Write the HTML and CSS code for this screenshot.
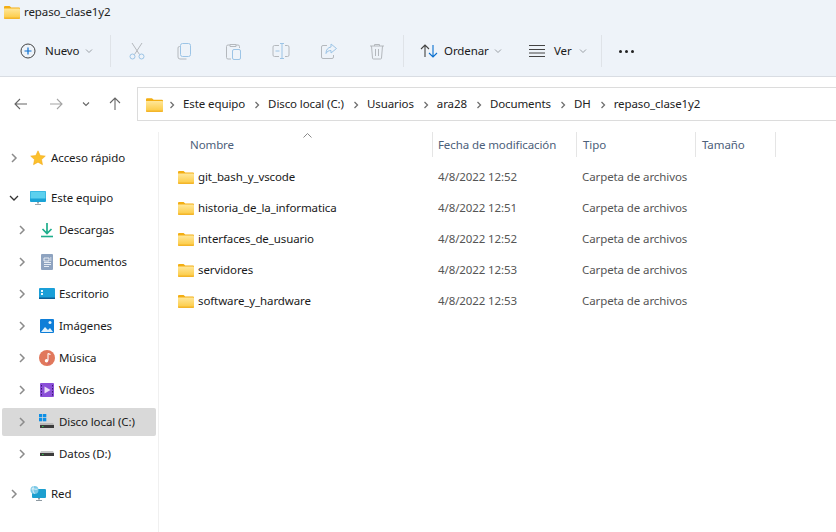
FILE: index.html
```html
<!DOCTYPE html>
<html lang="es">
<head>
<meta charset="utf-8">
<title>repaso_clase1y2</title>
<link rel="stylesheet" href="styles.css">
</head>
<body>
<svg class="defs" width="0" height="0" aria-hidden="true">
  <defs>
    <linearGradient id="fg" x1="0" y1="0" x2="0" y2="1"><stop offset="0" stop-color="#ffe79a"/><stop offset="1" stop-color="#fcc93f"/></linearGradient>
    <symbol id="folder" viewBox="0 0 16 14">
      <path d="M0 2a1 1 0 0 1 1-1h4.600l1.600 1.500H15a1 1 0 0 1 1 1V6H0z" fill="#f3ae13"/>
      <path d="M0 3.600h15.200a.8.8 0 0 1 .8.8v8.400a1 1 0 0 1-1 1H1a1 1 0 0 1-1-1z" fill="url(#fg)"/>
      <path d="M0 12.600h16v.4a1 1 0 0 1-1 1H1a1 1 0 0 1-1-1z" fill="#f3b52a"/>
    </symbol>
    <symbol id="chev" viewBox="0 0 10 10"><path d="M3 1l4 4-4 4" fill="none" stroke="#8b8b8b" stroke-width="1.500"/></symbol>
    <symbol id="crumb" viewBox="0 0 6 8"><path d="M1.500 1l3 3-3 3" fill="none" stroke="#6f6f6f" stroke-width="1.300"/></symbol>
    <symbol id="down" viewBox="0 0 8 6"><path d="M1 1.500l3 3 3-3" fill="none" stroke="#9aa0a6" stroke-width="1"/></symbol>
  </defs>
</svg>

<header class="ribbon">
  <div class="titlebar">
    <svg class="title-icon"><use href="#folder"/></svg>
    <span>repaso_clase1y2</span>
  </div>
  <div class="toolbar">
    <div class="tool tool-new">
      <svg class="ic20" viewBox="0 0 20 20"><circle cx="10" cy="10" r="7" fill="none" stroke="#444" stroke-width="1"/><path d="M10 6.500v7M6.500 10h7" stroke="#0a6fd0" stroke-width="1.200"/></svg>
      <span>Nuevo</span>
      <svg class="caret"><use href="#down"/></svg>
    </div>
    <div class="sep"></div>
    <div class="icons">
      <svg class="ic20" viewBox="0 0 20 20"><g fill="none" stroke-width="1"><path d="M5 2l7.500 11.500M15 2L7.500 13.500" stroke="#b4b8bd"/><circle cx="5.500" cy="15.500" r="2.500" stroke="#9cc4e6"/><circle cx="14.500" cy="15.500" r="2.500" stroke="#9cc4e6"/></g></svg>
      <svg class="ic20" viewBox="0 0 20 20"><g fill="none" stroke-width="1"><path d="M5 5.500h-.5A1.500 1.500 0 0 0 3 7v9a2 2 0 0 0 2 2h6.500" stroke="#b4b8bd"/><rect x="5.500" y="2.500" width="10" height="13" rx="2" stroke="#9cc4e6"/></g></svg>
      <svg class="ic20" viewBox="0 0 20 20"><g fill="none" stroke-width="1"><path d="M7 4H5a1.500 1.500 0 0 0-1.500 1.500v11A1.500 1.500 0 0 0 5 18h3M13 4h2a1.500 1.500 0 0 1 1.500 1.500V7M7 3.500h6v2H7z" stroke="#b4b8bd"/><rect x="9.500" y="8.500" width="8" height="10" rx="1.500" stroke="#9cc4e6"/></g></svg>
      <svg class="ic20" viewBox="0 0 20 20"><g fill="none" stroke-width="1"><path d="M8 4.500H3.500A1.500 1.500 0 0 0 2 6v8a1.500 1.500 0 0 0 1.500 1.500H8M14 4.500h2.500A1.500 1.500 0 0 1 18 6v8a1.500 1.500 0 0 1-1.500 1.500H14" stroke="#b4b8bd"/><path d="M9 2.500h4M9 17.500h4M11 2.500v15M4.500 10h4" stroke="#9cc4e6"/></g></svg>
      <svg class="ic20" viewBox="0 0 20 20"><g fill="none" stroke-width="1"><path d="M8 4.500H4A1.500 1.500 0 0 0 2.500 6v10A1.500 1.500 0 0 0 4 17.500h9a1.500 1.500 0 0 0 1.500-1.500v-2" stroke="#b4b8bd"/><path d="M12 3l5.500 4.500L12 12V9.500c-2.500 0-4 1-5 3 0-4 2-6 5-6.500z" stroke="#9cc4e6"/></g></svg>
      <svg class="ic20" viewBox="0 0 20 20"><g fill="none" stroke="#b4b8bd" stroke-width="1"><path d="M3 5h14M7.500 5V3.500h5V5M4.500 5l1 12a1 1 0 0 0 1 1h7a1 1 0 0 0 1-1l1-12M8.500 8v7M11.500 8v7"/></g></svg>
    </div>
    <div class="sep"></div>
    <div class="tool tool-sort">
      <svg class="ic20" viewBox="0 0 20 20"><g fill="none" stroke-width="1.100"><path d="M6 16V4M2 8l4-4 4 4" stroke="#444"/><path d="M14 4v12M10 12l4 4 4-4" stroke="#0a6fd0"/></g></svg>
      <span>Ordenar</span>
      <svg class="caret"><use href="#down"/></svg>
    </div>
    <div class="tool tool-view">
      <svg class="ic20" viewBox="0 0 20 20"><path d="M2 4.500h16M2 8.500h16M2 12h16M2 15.500h16" stroke="#444" stroke-width="1" fill="none"/></svg>
      <span>Ver</span>
      <svg class="caret"><use href="#down"/></svg>
    </div>
    <div class="sep"></div>
    <div class="more"><i></i><i></i><i></i></div>
  </div>
</header>

<nav class="addressbar">
  <div class="navs">
    <svg class="nav-ic" viewBox="0 0 16 16"><path d="M14 8H2.500M7 3L2 8l5 5" fill="none" stroke="#666" stroke-width="1.100"/></svg>
    <svg class="nav-ic" viewBox="0 0 16 16"><path d="M2 8h11.500M9 3l5 5-5 5" fill="none" stroke="#a4a4a4" stroke-width="1.100"/></svg>
    <svg class="nav-drop" viewBox="0 0 8 6"><path d="M1 1.500l3 3 3-3" fill="none" stroke="#666" stroke-width="1.100"/></svg>
    <svg class="nav-ic" viewBox="0 0 16 16"><path d="M8 14V2.500M3 7l5-5 5 5" fill="none" stroke="#666" stroke-width="1.100"/></svg>
  </div>
  <div class="path">
    <svg class="path-folder"><use href="#folder"/></svg>
    <svg class="crumb"><use href="#crumb"/></svg><span>Este equipo</span>
    <svg class="crumb"><use href="#crumb"/></svg><span>Disco local (C:)</span>
    <svg class="crumb"><use href="#crumb"/></svg><span>Usuarios</span>
    <svg class="crumb"><use href="#crumb"/></svg><span>ara28</span>
    <svg class="crumb"><use href="#crumb"/></svg><span>Documents</span>
    <svg class="crumb"><use href="#crumb"/></svg><span>DH</span>
    <svg class="crumb"><use href="#crumb"/></svg><span>repaso_clase1y2</span>
  </div>
</nav>

<div class="main">
  <aside class="side">
    <div class="side-row top"><svg class="chev"><use href="#chev"/></svg>
      <svg class="side-ic" viewBox="0 0 16 16"><path d="M8 .8l2.200 4.700 5.100.6-3.800 3.500 1 5.100L8 12.200l-4.500 2.500 1-5.100L.7 6.100l5.100-.6z" fill="#fbc02d" stroke="#f2a50c" stroke-width=".5"/></svg>
      <span>Acceso rápido</span></div>
    <div class="side-row top gap"><svg class="chev open" viewBox="0 0 10 10"><path d="M1 3l4 4 4-4" fill="none" stroke="#333" stroke-width="1.300"/></svg>
      <svg class="side-ic" viewBox="0 0 16 16"><rect x="0" y="1" width="16" height="11" rx="1" fill="#1aa3d6"/><rect x=".5" y="1.500" width="15" height="7" fill="#5cd0ee"/><path d="M7 12h2v1.500H7zM5 14h6v1H5z" fill="#9aa6ad"/></svg>
      <span>Este equipo</span></div>
    <div class="side-row sub"><svg class="chev"><use href="#chev"/></svg>
      <svg class="side-ic" viewBox="0 0 16 16"><path d="M8 1v10M3.500 7L8 11.500 12.500 7" fill="none" stroke="#1fae8c" stroke-width="1.700"/><path d="M2 14.500h12" stroke="#1fae8c" stroke-width="1.600"/></svg>
      <span>Descargas</span></div>
    <div class="side-row sub"><svg class="chev"><use href="#chev"/></svg>
      <svg class="side-ic" viewBox="0 0 16 16"><rect x="2" y="0" width="12" height="16" rx="1" fill="#8ea3c0"/><path d="M5 4h5v3H5zM5 8.500h7M5 10.500h7M5 12.500h5M11 4h1.500M11 6h1.500" stroke="#f0f4f8" stroke-width=".9" fill="none"/></svg>
      <span>Documentos</span></div>
    <div class="side-row sub"><svg class="chev"><use href="#chev"/></svg>
      <svg class="side-ic" viewBox="0 0 16 16"><rect x="0" y="2" width="16" height="11" rx="1" fill="#1a9fd8"/><rect x="0" y="11.500" width="16" height="1.500" fill="#0d5f96"/><rect x="2" y="4" width="2" height="2" fill="#e8f7fd"/><rect x="2" y="7" width="2" height="2" fill="#e8f7fd"/></svg>
      <span>Escritorio</span></div>
    <div class="side-row sub"><svg class="chev"><use href="#chev"/></svg>
      <svg class="side-ic" viewBox="0 0 16 16"><rect x="1" y="1" width="14" height="14" rx="1" fill="#0e7ed8"/><path d="M2 14l4-5 3 3 2-2 3 4z" fill="#e3f2fb"/><circle cx="11" cy="4.500" r="1.500" fill="#e3f2fb"/></svg>
      <span>Imágenes</span></div>
    <div class="side-row sub"><svg class="chev"><use href="#chev"/></svg>
      <svg class="side-ic" viewBox="0 0 16 16"><circle cx="8" cy="8" r="8" fill="#e1785c"/><path d="M8 8.500a3 3 0 0 1 0 6 8 8 0 0 0 3-6z" fill="#c7607e"/><path d="M9 3.500v7" stroke="#fff" stroke-width="1.100"/><path d="M9 3.500l2.500 1" stroke="#fff" stroke-width="1.200"/><circle cx="7.500" cy="10.800" r="1.700" fill="#fff"/></svg>
      <span>Música</span></div>
    <div class="side-row sub"><svg class="chev"><use href="#chev"/></svg>
      <svg class="side-ic" viewBox="0 0 16 16"><rect x="1" y="1" width="14" height="14" rx="1" fill="#8b4fd8"/><path d="M5.500 4.500v7L11.500 8z" fill="#eadcf9"/><path d="M2.500 3v1.500M2.500 6v1.500M2.500 9v1.500M2.500 12v1.500M13.500 3v1.500M13.500 6v1.500M13.500 9v1.500M13.500 12v1.500" stroke="#3b1a70" stroke-width="1"/></svg>
      <span>Vídeos</span></div>
    <div class="side-row sub selected"><svg class="chev"><use href="#chev"/></svg>
      <svg class="side-ic" viewBox="0 0 16 16"><rect x="0" y="0" width="3.300" height="3.300" fill="#0c8fe6"/><rect x="4" y="0" width="3.300" height="3.300" fill="#0c8fe6"/><rect x="0" y="4" width="3.300" height="3.300" fill="#0c8fe6"/><rect x="4" y="4" width="3.300" height="3.300" fill="#0c8fe6"/><path d="M1 9h13l1 2H1z" fill="#b9b9b9"/><rect x="1" y="11" width="14" height="3" fill="#3c3c3c"/><rect x="3" y="12" width="1.500" height="1" fill="#35d04e"/></svg>
      <span>Disco local (C:)</span></div>
    <div class="side-row sub"><svg class="chev"><use href="#chev"/></svg>
      <svg class="side-ic" viewBox="0 0 16 16"><path d="M2 5h12l1 2H1z" fill="#c8c8c8"/><rect x="1" y="7" width="14" height="3" fill="#3c3c3c"/><rect x="3" y="8" width="1.500" height="1" fill="#35d04e"/></svg>
      <span>Datos (D:)</span></div>
    <div class="side-row top gap"><svg class="chev"><use href="#chev"/></svg>
      <svg class="side-ic" viewBox="0 0 16 16"><rect x="2" y="3" width="14" height="9" rx="1" fill="#1d9fcf"/><path d="M8 12h2v1.500H8zM6 14h6v1H6z" fill="#8e9aa2"/><circle cx="4.500" cy="4" r="4" fill="#7bc8e6"/><path d="M1.500 3c2-1 4 1 6 0M3.500 .5c-1 2-1 5 1 7" stroke="#fff" stroke-width=".7" fill="none"/></svg>
      <span>Red</span></div>
  </aside>

  <section class="files">
    <svg class="sort-arrow" viewBox="0 0 9 5"><path d="M.5 4.500l4-4 4 4" fill="none" stroke="#8a8a8a" stroke-width="1"/></svg>
    <div class="cols head">
      <div class="c-name">Nombre</div>
      <div class="c-date">Fecha de modificación</div>
      <div class="c-type">Tipo</div>
      <div class="c-size">Tamaño</div>
    </div>
    <div class="cols row"><div class="c-name"><svg class="row-folder"><use href="#folder"/></svg><span>git_bash_y_vscode</span></div><div class="c-date">4/8/2022 12:52</div><div class="c-type">Carpeta de archivos</div></div>
    <div class="cols row"><div class="c-name"><svg class="row-folder"><use href="#folder"/></svg><span>historia_de_la_informatica</span></div><div class="c-date">4/8/2022 12:51</div><div class="c-type">Carpeta de archivos</div></div>
    <div class="cols row"><div class="c-name"><svg class="row-folder"><use href="#folder"/></svg><span>interfaces_de_usuario</span></div><div class="c-date">4/8/2022 12:52</div><div class="c-type">Carpeta de archivos</div></div>
    <div class="cols row"><div class="c-name"><svg class="row-folder"><use href="#folder"/></svg><span>servidores</span></div><div class="c-date">4/8/2022 12:53</div><div class="c-type">Carpeta de archivos</div></div>
    <div class="cols row"><div class="c-name"><svg class="row-folder"><use href="#folder"/></svg><span>software_y_hardware</span></div><div class="c-date">4/8/2022 12:53</div><div class="c-type">Carpeta de archivos</div></div>
  </section>
</div>
</body>
</html>
```

FILE: styles.css
```css
* { box-sizing: border-box; }
html, body { margin: 0; padding: 0; }
body {
  width: 836px;
  height: 532px;
  overflow: hidden;
  background: #fff;
  color: #1a1a1a;
  font: 11.5px/16px "Noto Sans", "Open Sans", sans-serif;
  letter-spacing: -0.1px;
}
svg { display: block; flex: none; }
.defs { position: absolute; }

.ribbon {
  height: 77px;
  background: #eef3f9;
  border-bottom: 1px solid #d9dde3;
}
.titlebar {
  height: 24px;
  display: flex;
  align-items: center;
  padding-left: 4px;
  gap: 4px;
  color: #222;
}
.title-icon { width: 16px; height: 14px; }
.toolbar {
  height: 52px;
  display: flex;
  align-items: center;
  padding-top: 2px;
}
.tool { display: flex; align-items: center; flex: none; }
.tool-new { margin-left: 18px; width: 92px; gap: 7px; }
.tool-new .caret { margin-left: -1px; }
.ic20 { width: 20px; height: 20px; }
.caret { width: 8px; height: 6px; }
.sep { width: 1px; height: 32px; background: #dfe3e8; flex: none; }
.icons { display: flex; padding-left: 16px; gap: 28px; width: 292px; flex: none; }
.tool-sort { margin-left: 15px; gap: 5px; width: 108px; }
.tool-view { gap: 7px; width: 74px; }
.more { display: flex; gap: 3px; margin-left: 17px; }
.more i { width: 3px; height: 3px; border-radius: 50%; background: #222; }

.addressbar {
  height: 55px;
  display: flex;
  align-items: center;
  padding-bottom: 1px;
}
.navs { width: 137px; display: flex; align-items: center; flex: none; padding-left: 13px; }
.nav-ic { width: 16px; height: 16px; }
.nav-ic + .nav-ic { margin-left: 19px; }
.nav-drop { width: 8px; height: 6px; margin: 0 17px 0 18px; }
.path {
  flex: 1;
  height: 34px;
  display: flex;
  align-items: center;
  padding-left: 8px;
  border: 1px solid #dcdcdc;
  border-right: 0;
  color: #222;
}
.path-folder { width: 17px; height: 15px; margin-right: 6px; }
.crumb { width: 6px; height: 8px; margin: 1px 8px 0 0; }
.path span { margin-right: 9px; }

.main { display: flex; height: 400px; }
.side {
  width: 159px;
  height: 400px;
  flex: none;
  border-right: 1px solid #f0f0f0;
  padding: 12px 2px 0;
}
.side-row {
  height: 28px;
  margin-bottom: 4px;
  display: flex;
  align-items: center;
  border-radius: 2px;
}
.side-row.gap { margin-top: 12px; }
.chev { width: 10px; height: 10px; margin-left: 7px; }
.side-ic { width: 16px; height: 16px; }
.sub .chev { margin-left: 15px; }
.sub .side-ic { margin-left: 12px; margin-right: 4px; }
.side-row.top .side-ic { margin-left: 11px; margin-right: 5px; }
.selected { background: #d9d9d9; width: 154px; }

.files { flex: 1; position: relative; color: #555; }
.sort-arrow { position: absolute; left: 144px; top: 1px; width: 9px; height: 5px; }
.cols { display: flex; }
.cols > div { flex: none; }
.c-name { width: 273px; padding-left: 31px; }
.c-date { width: 144px; padding-left: 6px; }
.c-type { width: 119px; padding-left: 6px; }
.c-size { width: 81px; padding-left: 6px; }
.head {
  height: 25px;
  margin-bottom: 4px;
  line-height: 25px;
  color: #4c607a;
}
.head > div + div { border-left: 1px solid #e5e5e5; }
.head .c-date { padding-left: 5px; }
.head .c-size { border-right: 1px solid #e5e5e5; }
.row { height: 31px; align-items: center; }
.row .c-name { display: flex; align-items: center; padding-left: 19px; gap: 4px; color: #1a1a1a; }
.row-folder { width: 16px; height: 14px; }
```
